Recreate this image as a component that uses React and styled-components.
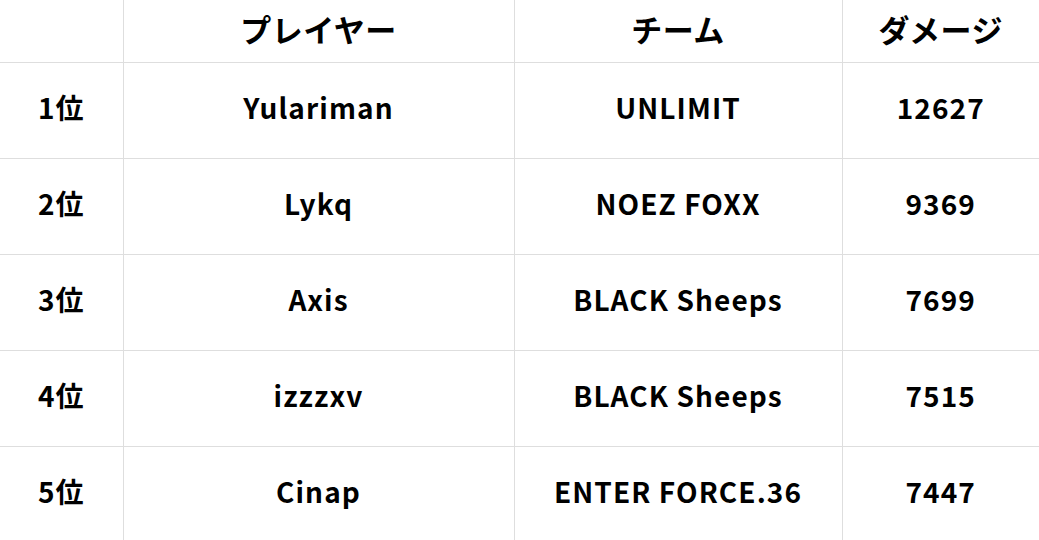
import React from 'react'
import styled, {createGlobalStyle} from 'styled-components'

const rows = [
  {rank: '1位', player: 'Yulariman', team: 'UNLIMIT', damage: 12627},
  {rank: '2位', player: 'Lykq', team: 'NOEZ FOXX', damage: 9369},
  {rank: '3位', player: 'Axis', team: 'BLACK Sheeps', damage: 7699},
  {rank: '4位', player: 'izzzxv', team: 'BLACK Sheeps', damage: 7515},
  {rank: '5位', player: 'Cinap', team: 'ENTER FORCE.36', damage: 7447},
]

const GlobalStyle = createGlobalStyle`
  html, body {
    margin: 0;
    padding: 0;
    background: #fff;
  }
  body {
    font-family: "Noto Sans CJK JP", "Noto Sans", sans-serif;
    color: #000;
    overflow: hidden;
  }
`

export default function App() {
  return (
    <>
      <GlobalStyle/>
      <Table>
        <colgroup>
          <col style={{width: 123}}/>
          <col style={{width: 391}}/>
          <col style={{width: 328}}/>
          <col/>
        </colgroup>
        <thead>
          <Row height={62}>
            <HeadCell/>
            <HeadCell>プレイヤー</HeadCell>
            <HeadCell>チーム</HeadCell>
            <HeadCell>ダメージ</HeadCell>
          </Row>
        </thead>
        <tbody>
          {rows.map((row) => (
            <Row key={row.rank} height={96}>
              <Cell>{row.rank}</Cell>
              <Cell>{row.player}</Cell>
              <Cell>{row.team}</Cell>
              <Cell>{row.damage}</Cell>
            </Row>
          ))}
        </tbody>
      </Table>
    </>
  )
}

const Table = styled.table`
  width: 1039px;
  border-collapse: collapse;
  table-layout: fixed;
`
const Row = styled.tr`
  height: ${({height}) => height}px;
`
const HeadCell = styled.th`
  padding: 0 0 4px;
  font-size: 31px;
  font-weight: 700;
  line-height: 1;
  text-align: center;
  vertical-align: middle;
  letter-spacing: 0.5px;
  border-bottom: 1px solid #dedede;
  & + & {
    border-left: 1px solid #dedede;
  }
`
const Cell = styled.td`
  padding: 0 0 6px;
  font-size: 28px;
  font-weight: 700;
  line-height: 1;
  text-align: center;
  vertical-align: middle;
  letter-spacing: 1.1px;
  border-bottom: 1px solid #dedede;
  & + & {
    border-left: 1px solid #dedede;
  }
`
